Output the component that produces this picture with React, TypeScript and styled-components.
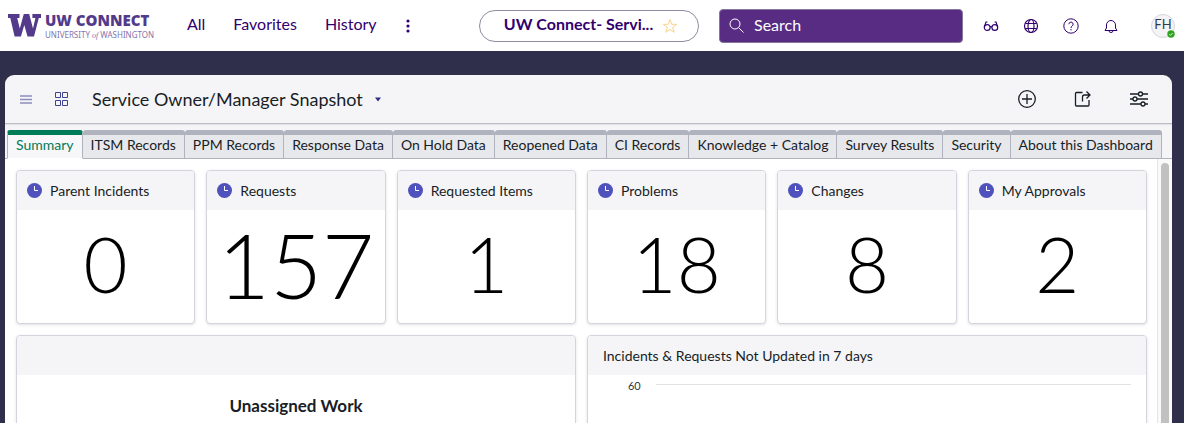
import React from "react";
import styled, { createGlobalStyle, css } from "styled-components";

const GlobalStyle = createGlobalStyle`
  *, *::before, *::after { box-sizing: border-box; }
  body { margin: 0; background: #302f4b; font-family: Lato, "Liberation Sans", sans-serif; color: #181d26; }
  button { font: inherit; color: inherit; background: none; border: 0; padding: 0; cursor: pointer; }
  h1, h2, p { margin: 0; font-weight: 400; }
  svg { display: block; flex: none; }
`;

const Page = styled.div`
  display: flex;
  flex-direction: column;
  height: 100vh;
  overflow: hidden;
`;

const TopBar = styled.header`
  display: flex;
  align-items: center;
  height: 51px;
  flex: none;
  padding: 0 8px;
  background: #fff;
  color: #32006e;
`;

const Logo = styled.a`
  display: flex;
  align-items: center;
  gap: 4px;
  width: 146px;
  flex: none;
  color: #533a8b;
  text-decoration: none;
`;

const LogoWords = styled.span`
  display: flex;
  flex-direction: column;
  gap: 3px;
  white-space: nowrap;
`;

const LogoName = styled.span`
  font: 800 15px/16px "Open Sans", sans-serif;
`;

const LogoPlace = styled.span`
  font: 400 8px/8px "Noto Sans", sans-serif;
  color: #8473ac;
`;

const LogoOf = styled.em`
  font-family: "Liberation Serif", serif;
`;

const MainNav = styled.nav`
  display: flex;
  align-items: center;
  gap: 28px;
  margin-left: 33px;
  font-size: 16px;
  line-height: 20px;
`;

const NavLink = styled.a`
  padding-bottom: 3px;
  color: inherit;
  text-decoration: none;
`;

const ContextPill = styled.div`
  display: flex;
  align-items: center;
  justify-content: center;
  gap: 9px;
  width: 220px;
  height: 32px;
  margin-left: auto;
  padding-left: 4px;
  border: 1px solid #8f8c9f;
  border-radius: 16px;
  font-size: 16px;
  line-height: 20px;
  font-weight: 700;
`;

const ContextName = styled.span`
  padding-bottom: 3px;
`;

const SearchBox = styled.label`
  display: flex;
  align-items: center;
  gap: 10px;
  width: 244px;
  height: 34px;
  margin-left: 20px;
  padding: 0 9px;
  background: #582c83;
  border: 1px solid #84779a;
  border-radius: 4px;
  color: #fff;
`;

const SearchInput = styled.input`
  flex: 1;
  min-width: 0;
  border: 0;
  outline: 0;
  padding: 0 0 2px;
  background: none;
  color: #fff;
  font: 400 16px/20px Lato, sans-serif;
  &::placeholder { color: #fff; opacity: 1; }
`;

const Utilities = styled.div`
  display: flex;
  align-items: center;
  gap: 24px;
  margin-left: 20px;
`;

const IconButton = styled.button`
  display: grid;
  place-items: center;
`;

const Avatar = styled.button`
  position: relative;
  display: grid;
  place-items: center;
  width: 24px;
  height: 24px;
  margin-left: 8px;
  margin-right: 1px;
  padding-bottom: 3px;
  border: 1px solid #d5d6de;
  border-radius: 50%;
  background: #f4f4f7;
  color: #2f3b4b;
  font-size: 13px;
  line-height: 16px;
`;

const Presence = styled.svg`
  position: absolute;
  right: -1px;
  bottom: -1px;
`;

const Panel = styled.main`
  display: flex;
  flex-direction: column;
  flex: 1;
  min-height: 0;
  margin: 24px 12px 0 5px;
  overflow: hidden;
  background: #f5f5f8;
  border-radius: 9px 9px 0 0;
`;

const PanelHeader = styled.div`
  display: flex;
  align-items: center;
  flex: none;
  height: 49px;
  padding: 0 23px 0 15px;
  border-bottom: 1px solid #bcbdc4;
  box-shadow: 0 1px 1px #e3e3e8;
`;

const HeaderNav = styled.div`
  display: flex;
  align-items: center;
  gap: 22px;
`;

const Title = styled.h1`
  margin: 0 11px 0 23px;
  font-size: 18px;
  line-height: 24px;
`;

const HeaderTools = styled.div`
  display: flex;
  gap: 36px;
  margin-left: auto;
`;

const TabList = styled.div`
  display: flex;
  flex: none;
  padding: 6px 2px 0;
  border-bottom: 1px solid #b0b3be;
`;

const Tab = styled.button<{ $active?: boolean }>`
  height: 29px;
  margin-bottom: -1px;
  padding: 0 8px 4px;
  border-right: 1px solid #b0b3be;
  border-top: 5px solid #b0b3be;
  border-bottom: 1px solid #b0b3be;
  border-radius: 3px 3px 0 0;
  background: #e7e8ec;
  font-size: 14px;
  line-height: 18px;
  white-space: nowrap;
  ${(p) => p.$active && css`
    border-left: 1px solid #b0b3be;
    border-top-color: #007b58;
    border-bottom-color: #fff;
    background: #f7f7f9;
    color: #007b58;
  `}
`;

const Scroller = styled.div`
  display: flex;
  flex: 1;
  min-height: 0;
  background: #fff;
`;

const Board = styled.div`
  display: grid;
  grid-template-columns: repeat(6, 1fr);
  grid-template-rows: 154px 320px;
  flex: 1;
  gap: 11px;
  padding: 11px 10px 11px 11px;
`;

const ScrollTrack = styled.div`
  flex: none;
  width: 15px;
  padding: 4px 3px 0;
  background: #fafafa;
  border-left: 1px solid #e5e5e5;
`;

const ScrollThumb = styled.div`
  height: 100%;
  border-radius: 4px 4px 0 0;
  background: #c1c1c1;
`;

const Card = styled.section<{ $wide?: boolean }>`
  display: flex;
  flex-direction: column;
  grid-column: span ${(p) => (p.$wide ? 3 : 1)};
  min-width: 0;
  overflow: hidden;
  border: 1px solid #d3d4de;
  border-radius: 4px;
  background: #fff;
  box-shadow: 0 1px 3px rgba(40, 40, 60, 0.14);
`;

const CardHeader = styled.div<{ $wide?: boolean }>`
  display: flex;
  align-items: center;
  gap: 8px;
  flex: none;
  height: 39px;
  padding: 0 ${(p) => (p.$wide ? 15 : 10)}px;
  background: #f5f5f8;
`;

const CardTitle = styled.h2`
  font-size: 14px;
  line-height: 20px;
  white-space: nowrap;
`;

const Score = styled.p<{ $large?: boolean }>`
  flex: 1;
  display: grid;
  place-items: center;
  padding-bottom: 6px;
  color: #000;
  font-weight: 300;
  font-size: ${(p) => (p.$large ? 90 : 76)}px;
  line-height: 106px;
`;

const Headline = styled.p`
  margin-top: 20px;
  text-align: center;
  font-size: 17px;
  line-height: 22px;
  font-weight: 700;
`;

const AxisRow = styled.div`
  display: flex;
  align-items: center;
  gap: 15px;
  padding: 3px 15px 0 40px;
  font-size: 11px;
  line-height: 16px;
  color: #2f3644;
`;

const GridLine = styled.div`
  flex: 1;
  height: 1px;
  margin-bottom: 3px;
  background: #e2e2e4;
`;

const stroke = { fill: "none", stroke: "currentColor", strokeWidth: 1 } as const;

const ClockIcon = () => (
  <svg width="15" height="15" viewBox="0 0 15 15" aria-hidden="true">
    <circle cx="7.5" cy="7.5" r="7.5" fill="#4f52bd" />
    <path d="M7.5 3v4.500H11" fill="none" stroke="#fff" />
  </svg>
);

const tabs = ["Summary", "ITSM Records", "PPM Records", "Response Data", "On Hold Data", "Reopened Data", "CI Records", "Knowledge + Catalog", "Survey Results", "Security", "About this Dashboard"];

const scores = [
  { title: "Parent Incidents", value: "0" },
  { title: "Requests", value: "157" },
  { title: "Requested Items", value: "1" },
  { title: "Problems", value: "18" },
  { title: "Changes", value: "8" },
  { title: "My Approvals", value: "2" },
];

export default function App() {
  return (
    <Page>
      <GlobalStyle />
      <TopBar>
        <Logo href="#">
          <svg width="33" height="23" viewBox="0 0 33 23" aria-hidden="true">
            <path fill="currentColor" d="M0 0h11.500v4H9.200l2.600 10.500L15.800 0h5.400l3.800 14.500L27.400 4h-3V0H33v4h-2.200L26 22.500h-6.500L16.300 11 12.900 22.500H6.600L2.300 4H0z" />
          </svg>
          <LogoWords>
            <LogoName>UW CONNECT</LogoName>
            <LogoPlace>UNIVERSITY <LogoOf>of</LogoOf> WASHINGTON</LogoPlace>
          </LogoWords>
        </Logo>
        <MainNav aria-label="Main">
          <NavLink href="#">All</NavLink>
          <NavLink href="#">Favorites</NavLink>
          <NavLink href="#">History</NavLink>
          <IconButton aria-label="More menus">
            <svg width="6" height="14" viewBox="0 0 6 14" fill="currentColor">
              <circle cx="3" cy="2" r="1.600" /><circle cx="3" cy="7" r="1.600" /><circle cx="3" cy="12" r="1.600" />
            </svg>
          </IconButton>
        </MainNav>
        <ContextPill>
          <ContextName>UW Connect- Servi...</ContextName>
          <IconButton aria-label="Add to favorites">
            <svg width="16" height="16" viewBox="0 0 16 16" fill="none" stroke="#fbd28a">
              <path d="M8 1.500l1.700 4.800h5l-4 3.100 1.500 4.900L8 11.400l-4.200 2.900 1.500-4.900-4-3.100h5z" />
            </svg>
          </IconButton>
        </ContextPill>
        <SearchBox>
          <svg width="15" height="15" viewBox="0 0 15 15" {...stroke} aria-hidden="true">
            <circle cx="6" cy="6" r="5" /><path d="M9.700 9.700L14.500 14.500" />
          </svg>
          <SearchInput type="search" placeholder="Search" aria-label="Search" />
        </SearchBox>
        <Utilities>
          <IconButton aria-label="Impersonate">
            <svg width="16" height="16" viewBox="0 0 16 16" {...stroke} strokeWidth="1.200">
              <circle cx="4.200" cy="9.500" r="2.900" /><circle cx="11.800" cy="9.500" r="2.900" />
              <path d="M7 9q1-.8 2 0M1.300 9L3 4h1.500M14.700 9L13 4h-1.500" />
            </svg>
          </IconButton>
          <IconButton aria-label="Scope">
            <svg width="16" height="16" viewBox="0 0 16 16" {...stroke} strokeWidth="1.200">
              <circle cx="8" cy="8" r="6.500" /><ellipse cx="8" cy="8" rx="3" ry="6.500" /><path d="M2.500 5.500h11M2.500 10.500h11" />
            </svg>
          </IconButton>
          <IconButton aria-label="Help">
            <svg width="16" height="16" viewBox="0 0 16 16" {...stroke}>
              <circle cx="8" cy="8" r="7.200" /><path d="M5.900 6.200a2.100 2.100 0 1 1 3.200 1.800Q8 8.600 8 10" /><path d="M8 11v1.300" />
            </svg>
          </IconButton>
          <IconButton aria-label="Notifications">
            <svg width="16" height="16" viewBox="0 0 16 16" {...stroke}>
              <path d="M2 12.500h12L12.500 10V7a4.500 4.500 0 0 0-9 0v3zM6 12.800a2 1.700 0 0 0 4 0" />
            </svg>
          </IconButton>
          <Avatar aria-label="User menu">
            FH
            <Presence width="8" height="8" viewBox="0 0 8 8">
              <circle cx="4" cy="4" r="3.700" fill="#2fa31f" /><path d="M2.300 4.200l1.200 1.200L5.700 3" fill="none" stroke="#fff" strokeWidth="0.800" />
            </Presence>
          </Avatar>
        </Utilities>
      </TopBar>

      <Panel>
        <PanelHeader>
          <HeaderNav>
            <IconButton aria-label="Menu">
              <svg width="12" height="9" viewBox="0 0 12 9" stroke="#8c8dbd" strokeWidth="1.600"><path d="M0 1h12M0 4.500h12M0 8h12" /></svg>
            </IconButton>
            <IconButton aria-label="Dashboards">
              <svg width="15" height="14" viewBox="0 0 15 14" fill="none" stroke="#3f4192"><path d="M1.500 .5h5v5h-5zM8.500 .5h5v5h-5zM1.500 8.500h5v5h-5zM8.500 8.500h5v5h-5z" /></svg>
            </IconButton>
          </HeaderNav>
          <Title>Service Owner/Manager Snapshot</Title>
          <IconButton aria-label="Choose dashboard">
            <svg width="8" height="5" viewBox="0 0 8 5"><path d="M1 .5h6L4 4.500z" fill="#2e2f86" /></svg>
          </IconButton>
          <HeaderTools>
            <IconButton aria-label="Add widget">
              <svg width="20" height="20" viewBox="0 0 20 20" {...stroke} strokeWidth="1.300"><circle cx="10" cy="10" r="8.300" /><path d="M10 5v10M5 10h10" /></svg>
            </IconButton>
            <IconButton aria-label="Share">
              <svg width="20" height="20" viewBox="0 0 20 20" {...stroke} strokeWidth="1.300"><path d="M9.500 3.500H3.500Q2.500 3.500 2.500 4.500v11.500q0 1 1 1h11.500q1 0 1-1v-5M9.500 12.500V8q0-2 2-2H17M13.500 2.500L17 6l-3.500 3.500" /></svg>
            </IconButton>
            <IconButton aria-label="Settings">
              <svg width="20" height="20" viewBox="0 0 20 20" {...stroke} strokeWidth="1.300"><path d="M1 5h8.500M13.500 5H19M1 10h3M8 10h11M1 15h11M16 15h3" /><circle cx="11.500" cy="5" r="2" /><circle cx="6" cy="10" r="2" /><circle cx="14" cy="15" r="2" /></svg>
            </IconButton>
          </HeaderTools>
        </PanelHeader>

        <TabList role="tablist">
          {tabs.map((t, i) => (
            <Tab key={t} role="tab" aria-selected={i === 0} $active={i === 0}>{t}</Tab>
          ))}
        </TabList>

        <Scroller>
          <Board>
            {scores.map((s) => (
              <Card key={s.title}>
                <CardHeader><ClockIcon /><CardTitle>{s.title}</CardTitle></CardHeader>
                <Score $large={s.value.length > 2}>{s.value}</Score>
              </Card>
            ))}
            <Card $wide>
              <CardHeader $wide />
              <Headline>Unassigned Work</Headline>
            </Card>
            <Card $wide>
              <CardHeader $wide><CardTitle>Incidents &amp; Requests Not Updated in 7 days</CardTitle></CardHeader>
              <AxisRow><span>60</span><GridLine /></AxisRow>
            </Card>
          </Board>
          <ScrollTrack aria-hidden="true"><ScrollThumb /></ScrollTrack>
        </Scroller>
      </Panel>
    </Page>
  );
}
